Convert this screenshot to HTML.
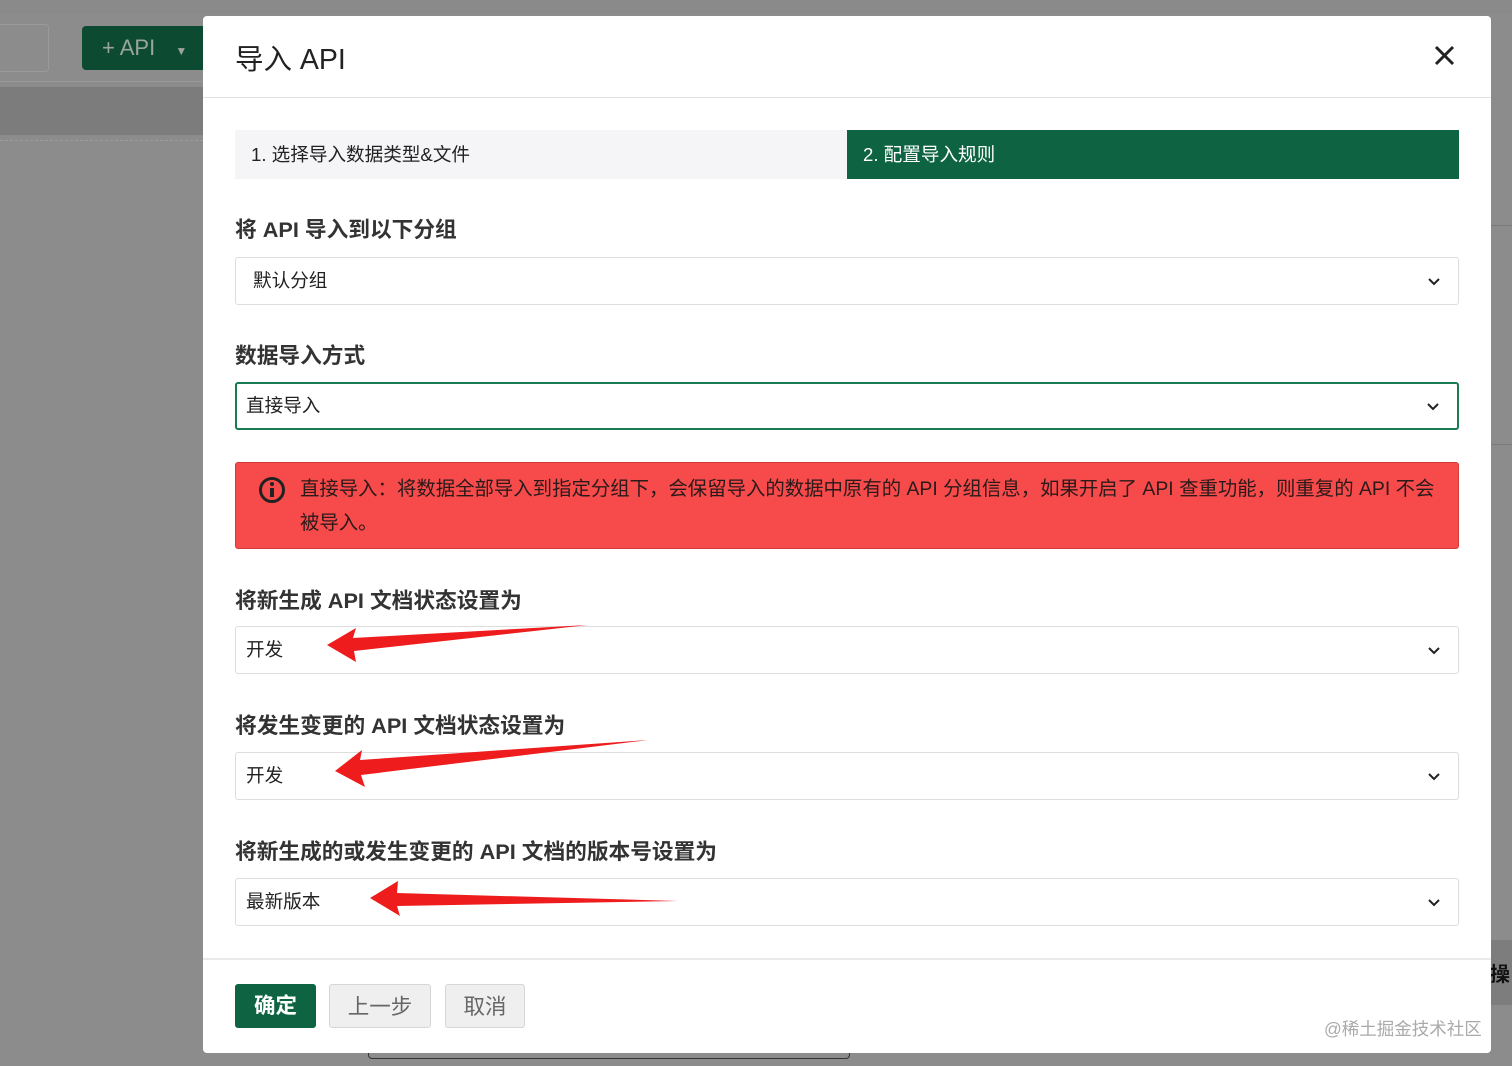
<!DOCTYPE html>
<html><head><meta charset="utf-8"><style>
*{box-sizing:border-box;margin:0;padding:0}
body{width:1512px;height:1066px;overflow:hidden;background:#8c8c8c;font-family:"Liberation Sans","Noto Sans CJK SC",sans-serif;position:relative;color:#222}
.abs{position:absolute}
.modal{left:203px;top:16px;width:1288px;height:1037px;background:#fff;border-radius:4px}
.sel{position:absolute;left:32px;width:1224px;height:48px;border:1px solid #ddd;border-radius:3px;font-size:18.6px;padding-left:10px;line-height:46px;color:#222}
.sel svg{position:absolute;right:18px;top:20px}
.lab{position:absolute;left:32px;font-size:21.7px;font-weight:bold;color:#333}
.btn{position:absolute;top:968px;height:44px;border-radius:3px;font-size:21.5px;line-height:44px;text-align:center}
</style></head><body>
<div class="abs" style="left:0;top:0;width:1512px;height:14px;background:#8a8a8a"></div>
<div class="abs" style="left:0;top:24px;width:49px;height:48px;border:1px solid #9a9a9a;border-left:none;border-radius:0 4px 4px 0"></div>
<div class="abs" style="left:82px;top:26px;width:130px;height:44px;background:#0d4a32;border-radius:4px;color:#9aa59f;font-size:22px;line-height:44px;padding-left:20px">+ API <span style="font-size:12px;margin-left:14px">▼</span></div>
<div class="abs" style="left:0;top:81px;width:203px;height:1px;background:#999"></div>
<div class="abs" style="left:0;top:87px;width:203px;height:48px;background:#7c7c7c"></div>
<div class="abs" style="left:0;top:140px;width:203px;border-top:1px dashed #9c9c9c"></div>
<div class="abs" style="left:1491px;top:225px;width:21px;height:220px;border-top:1px solid #7a7a7a;border-bottom:1px solid #7a7a7a"></div>
<div class="abs" style="left:1491px;top:940px;width:21px;height:65px;background:#7d7d7d"></div>
<div class="abs" style="left:1490px;top:958px;font-size:20px;font-weight:bold;color:#111">操</div>
<div class="abs" style="left:368px;top:1053px;width:482px;height:6px;border:1px solid #333;border-top:none;border-radius:0 0 4px 4px"></div>

<div class="abs modal">
  <div class="abs" style="left:32px;top:21px;font-size:28.5px;color:#222">导入 API</div>
  <svg class="abs" style="left:1231px;top:29px" width="21" height="21"><path d="M2 2L19 19M19 2L2 19" stroke="#222" stroke-width="3"/></svg>
  <div class="abs" style="left:0;top:81px;width:1288px;height:1px;background:#e2e2e2"></div>
  <div class="abs" style="left:32px;top:114px;width:612px;height:49px;background:#f5f5f7;font-size:18.6px;line-height:50px;padding-left:16px;color:#222">1. 选择导入数据类型&amp;文件</div>
  <div class="abs" style="left:644px;top:114px;width:612px;height:49px;background:#0e6343;font-size:18.6px;line-height:50px;padding-left:16px;color:#fff">2. 配置导入规则</div>

  <div class="lab" style="top:197px">将 API 导入到以下分组</div>
  <div class="sel" style="top:241px;padding-left:17px">默认分组<svg width="12" height="8"><path d="M1 1L6 6L11 1" stroke="#222" stroke-width="2" fill="none"/></svg></div>
  <div class="lab" style="top:323px">数据导入方式</div>
  <div class="sel" style="top:366px;border:2px solid #1a7a52;line-height:44px;padding-left:9px">直接导入<svg width="12" height="8" style="top:19px"><path d="M1 1L6 6L11 1" stroke="#222" stroke-width="2" fill="none"/></svg></div>

  <div class="abs" style="left:32px;top:446px;width:1224px;height:87px;background:#f64a4b;border:1px solid #d63a3a;border-radius:3px;font-size:19.4px;line-height:34px;color:#2a1a1a;padding:9px 0 0 64px">
    <svg class="abs" style="left:22px;top:13px" width="28" height="28"><circle cx="14" cy="14" r="11.5" stroke="#222" stroke-width="3" fill="none"/><rect x="12" y="12" width="4" height="9" fill="#222"/><circle cx="14" cy="8" r="2" fill="#222"/></svg>
    直接导入：将数据全部导入到指定分组下，会保留导入的数据中原有的 API 分组信息，如果开启了 API 查重功能，则重复的 API 不会<br>被导入。
  </div>

  <div class="lab" style="top:568px">将新生成 API 文档状态设置为</div>
  <div class="sel" style="top:610px">开发<svg width="12" height="8"><path d="M1 1L6 6L11 1" stroke="#222" stroke-width="2" fill="none"/></svg></div>
  <div class="lab" style="top:693px">将发生变更的 API 文档状态设置为</div>
  <div class="sel" style="top:736px">开发<svg width="12" height="8"><path d="M1 1L6 6L11 1" stroke="#222" stroke-width="2" fill="none"/></svg></div>
  <div class="lab" style="top:819px">将新生成的或发生变更的 API 文档的版本号设置为</div>
  <div class="sel" style="top:862px">最新版本<svg width="12" height="8"><path d="M1 1L6 6L11 1" stroke="#222" stroke-width="2" fill="none"/></svg></div>

  <div class="abs" style="left:0;top:942px;width:1288px;height:2px;background:#eaeaea"></div>
  <div class="btn" style="left:32px;width:81px;background:#0e6343;color:#fff;font-weight:bold">确定</div>
  <div class="btn" style="left:126px;width:102px;background:#efefef;border:1px solid #d6d6d6;color:#666">上一步</div>
  <div class="btn" style="left:242px;width:80px;background:#efefef;border:1px solid #d6d6d6;color:#666">取消</div>
  <div class="abs" style="left:1121px;top:1000px;font-size:17.5px;color:#aaa">@稀土掘金技术社区</div>
</div>

<svg class="abs" style="left:0;top:0" width="1512" height="1066">
  <polygon points="327,645 356,628 353,638 588,625 354,651 356,662" fill="#ee1c1c"/>
  <polygon points="335,771 362,750 360,760 648,740 361,775 365,787" fill="#ee1c1c"/>
  <polygon points="370,898 398,881 397,893 678,901 397,906 400,916" fill="#ee1c1c"/>
</svg>
</body></html>
